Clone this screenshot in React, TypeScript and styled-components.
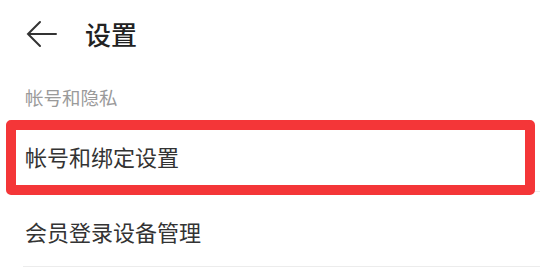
import React from "react";
import styled, { createGlobalStyle } from "styled-components";

const GlobalStyle = createGlobalStyle`
  html, body {
    margin: 0;
    padding: 0;
    background: #ffffff;
  }
  body {
    font-family: "Noto Sans CJK SC", "Noto Sans", sans-serif;
  }
`;

const Page = styled.div`
  width: 540px;
  height: 268px;
  overflow: hidden;
  background: #ffffff;
`;

const Header = styled.div`
  height: 68px;
  display: flex;
  align-items: center;
  padding-left: 25px;
  gap: 26px;
`;

const BackButton = styled.button`
  border: 0;
  background: none;
  padding: 0;
  width: 34px;
  height: 30px;
  display: flex;
  align-items: center;
  color: #333333;
`;

const Title = styled.h1`
  margin: 0;
  font-size: 26px;
  font-weight: 500;
  color: #222222;
  line-height: 1;
`;

const SectionLabel = styled.div`
  height: 49px;
  padding-left: 25px;
  display: flex;
  align-items: center;
  padding-top: 8px;
  box-sizing: border-box;
  font-size: 18.5px;
  color: #9a9a9a;
`;

const Row = styled.div<{ highlighted?: boolean }>`
  position: relative;
  height: 75px;
  box-sizing: border-box;
  margin-left: 23px;
  padding-left: 2px;
  padding-top: 3px;
  display: flex;
  align-items: center;
  border-bottom: 1px solid #ececec;
  font-size: 22px;
  color: #333333;
`;

const Highlight = styled.div`
  position: absolute;
  top: 3px;
  bottom: -4px;
  left: -17px;
  right: 5px;
  border: 10px solid #f43638;
  border-radius: 5px;
  pointer-events: none;
`;

const BackArrow = () => (
  <svg width="32" height="28" viewBox="0 0 32 28" fill="none">
    <path
      d="M31 14H3M15 2L3 14l12 12"
      stroke="currentColor"
      strokeWidth="2"
      strokeLinecap="round"
      strokeLinejoin="miter"
    />
  </svg>
);

export default function App() {
  return (
    <Page>
      <GlobalStyle />
      <Header>
        <BackButton aria-label="返回">
          <BackArrow />
        </BackButton>
        <Title>设置</Title>
      </Header>

      <SectionLabel>帐号和隐私</SectionLabel>

      <Row>
        帐号和绑定设置
        <Highlight />
      </Row>
      <Row>会员登录设备管理</Row>
    </Page>
  );
}
